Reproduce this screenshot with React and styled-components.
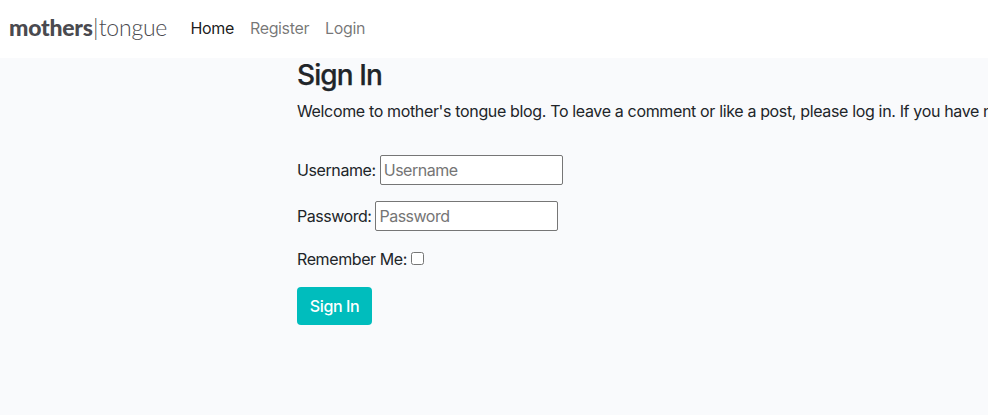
import React from "react";
import styled, { createGlobalStyle } from "styled-components";

const GlobalStyle = createGlobalStyle`
  *, *::before, *::after { box-sizing: border-box; }
  body {
    margin: 0;
    background: #f9fafc;
    color: #212529;
    font: 400 16px/24px Inter, "Liberation Sans", sans-serif;
    letter-spacing: -0.35px;
    overflow: hidden;
    -webkit-font-smoothing: antialiased;
  }
`;

const Navbar = styled.nav`
  display: flex;
  align-items: center;
  height: 58px;
  padding: 0 0 2px 9px;
  background: #fff;
`;

const Brand = styled.a`
  width: 173.5px;
  padding-bottom: 2px;
  font: 300 23px/34px Lato, sans-serif;
  letter-spacing: -0.22px;
  color: #4a4a4f;
  white-space: nowrap;
`;

const BrandStrong = styled.b`
  font-weight: 900;
  letter-spacing: -0.25px;
`;

const BrandBar = styled.span`
  margin: 0 0.5px 0 0.4px;
`;

const NavLink = styled.a`
  padding: 0 8px;
  white-space: nowrap;
  letter-spacing: -0.35px;
  color: ${(p) => (p.$active ? "rgba(0,0,0,.9)" : "rgba(0,0,0,.55)")};
`;

const Main = styled.main`
  margin-left: 297px;
  min-height: 357px;
`;

const Title = styled.h2`
  margin: 0;
  font-size: 28px;
  line-height: 34px;
  font-weight: 500;
  letter-spacing: -0.9px;
  -webkit-text-stroke: 0.25px currentColor;
`;

const Welcome = styled.p`
  margin: 7px 0 32px;
  white-space: nowrap;
`;

const Field = styled.div`
  display: flex;
  align-items: center;
  height: 30px;
  margin-bottom: 16px;
`;

const Label = styled.label`
  margin-right: 4px;
  letter-spacing: ${(p) => p.$tracking || "-0.4px"};
`;

const TextInput = styled.input`
  width: 183px;
  height: 30px;
  padding: 1px 3px;
  border: 1px solid #767676;
  border-radius: 2px;
  background: #fff;
  font: inherit;
  letter-spacing: -0.5px;
  &::placeholder { color: #757575; opacity: 1; }
`;

const CheckRow = styled(Field)`
  height: 24px;
`;

const Checkbox = styled.input`
  width: 13px;
  height: 13px;
  margin: 0 0 2px;
`;

const Submit = styled.button`
  width: 75px;
  height: 38px;
  padding: 0;
  border: 0;
  border-radius: 4px;
  background: #00bdbd;
  color: #fff;
  font: inherit;
  font-weight: 500;
  letter-spacing: -0.4px;
`;

export default function App() {
  return (
    <>
      <GlobalStyle />
      <Navbar>
        <Brand><BrandStrong>mothers</BrandStrong><BrandBar>|</BrandBar>tongue</Brand>
        <NavLink $active>Home</NavLink>
        <NavLink>Register</NavLink>
        <NavLink>Login</NavLink>
      </Navbar>
      <Main>
        <Title>Sign In</Title>
        <Welcome>Welcome to mother's tongue blog. To leave a comment or like a post, please log in. If you have not</Welcome>
        <form>
          <Field><Label htmlFor="user">Username:</Label><TextInput id="user" placeholder="Username" /></Field>
          <Field><Label htmlFor="pass" $tracking="-0.47px">Password:</Label><TextInput id="pass" type="password" placeholder="Password" /></Field>
          <CheckRow><Label htmlFor="remember">Remember Me:</Label><Checkbox id="remember" type="checkbox" /></CheckRow>
          <Submit type="button">Sign In</Submit>
        </form>
      </Main>
    </>
  );
}
